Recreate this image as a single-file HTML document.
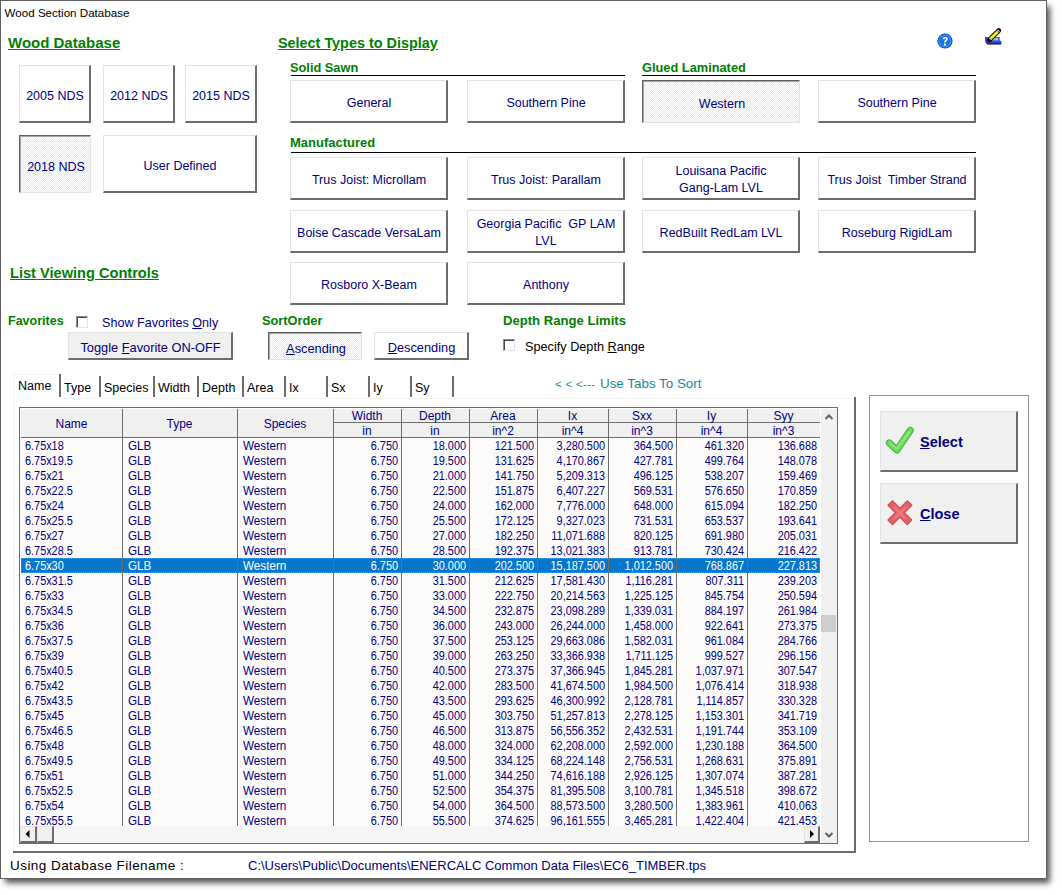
<!DOCTYPE html><html><head><meta charset="utf-8"><style>
html,body{margin:0;padding:0;width:1062px;height:895px;overflow:hidden;background:#fff;}
body{position:relative;font-family:"Liberation Sans", sans-serif;}
.t{position:absolute;white-space:nowrap;}
.b{position:absolute;box-sizing:content-box;}
svg.b{overflow:visible;}
</style></head><body>
<div class="b" style="left:0;top:0;width:1047px;height:879px;box-shadow:4px 5px 6px -1px rgba(0,0,0,0.68);"></div>
<div class="b" style="left:0;top:0;width:1045px;height:877px;border:1px solid #5f5f5f;background:#fff;"></div>
<div class="t" style="left:4.6px;top:7.18px;font-size:11.6px;line-height:11.6px;color:#000;">Wood Section Database</div>
<div class="t" style="left:8px;top:35.30px;font-size:15px;line-height:15px;color:#008000;font-weight:bold;"><u>Wood Database</u></div>
<div class="t" style="left:278px;top:35.81px;font-size:14.4px;line-height:14.4px;color:#008000;font-weight:bold;"><u>Select Types to Display</u></div>
<div class="t" style="left:10px;top:265.64px;font-size:14.6px;line-height:14.6px;color:#008000;font-weight:bold;"><u>List Viewing Controls</u></div>
<div class="b" style="left:19px;top:65px;width:69px;height:55px;background:#fff;border-top:1px solid #e3e3e3;border-left:1px solid #e3e3e3;border-bottom:2px solid #6c6c6c;border-right:2px solid #6c6c6c;"></div>
<div class="t" style="left:19px;width:72px;text-align:center;top:89.92px;font-size:12.5px;line-height:12.5px;color:#000080;">2005 NDS</div>
<div class="b" style="left:103px;top:65px;width:69px;height:55px;background:#fff;border-top:1px solid #e3e3e3;border-left:1px solid #e3e3e3;border-bottom:2px solid #6c6c6c;border-right:2px solid #6c6c6c;"></div>
<div class="t" style="left:103px;width:72px;text-align:center;top:89.92px;font-size:12.5px;line-height:12.5px;color:#000080;">2012 NDS</div>
<div class="b" style="left:185px;top:65px;width:69px;height:55px;background:#fff;border-top:1px solid #e3e3e3;border-left:1px solid #e3e3e3;border-bottom:2px solid #6c6c6c;border-right:2px solid #6c6c6c;"></div>
<div class="t" style="left:185px;width:72px;text-align:center;top:89.92px;font-size:12.5px;line-height:12.5px;color:#000080;">2015 NDS</div>
<div class="b" style="left:19px;top:135px;width:70px;height:56px;background:repeating-conic-gradient(#fafa62 0 25%, #fff 0 50%) 0 0/2px 2px;border-top:1px solid #606060;border-left:1px solid #606060;border-bottom:1px solid #e3e3e3;border-right:1px solid #e3e3e3;box-shadow:inset 1px 1px 0 #a4a4ac;"></div>
<div class="t" style="left:20px;width:72px;text-align:center;top:160.92px;font-size:12.5px;line-height:12.5px;color:#000080;">2018 NDS</div>
<div class="b" style="left:103px;top:135px;width:151px;height:55px;background:#fff;border-top:1px solid #e3e3e3;border-left:1px solid #e3e3e3;border-bottom:2px solid #6c6c6c;border-right:2px solid #6c6c6c;"></div>
<div class="t" style="left:103px;width:154px;text-align:center;top:159.92px;font-size:12.5px;line-height:12.5px;color:#000080;">User Defined</div>
<div class="t" style="left:290px;top:61.56px;font-size:12.8px;line-height:12.8px;color:#008000;font-weight:bold;">Solid Sawn</div>
<div class="b" style="left:291px;top:75px;width:334px;height:1px;background:#000;"></div>
<div class="t" style="left:642px;top:61.56px;font-size:12.8px;line-height:12.8px;color:#008000;font-weight:bold;">Glued Laminated</div>
<div class="b" style="left:642px;top:75px;width:334px;height:1px;background:#000;"></div>
<div class="t" style="left:290px;top:136.00px;font-size:13px;line-height:13px;color:#008000;font-weight:bold;">Manufactured</div>
<div class="b" style="left:291px;top:152px;width:685px;height:1px;background:#000;"></div>
<div class="b" style="left:290px;top:80px;width:155px;height:40px;background:#fff;border-top:1px solid #e3e3e3;border-left:1px solid #e3e3e3;border-bottom:2px solid #6c6c6c;border-right:2px solid #6c6c6c;"></div>
<div class="t" style="left:290px;width:158px;text-align:center;top:97.42px;font-size:12.5px;line-height:12.5px;color:#000080;">General</div>
<div class="b" style="left:467px;top:80px;width:155px;height:40px;background:#fff;border-top:1px solid #e3e3e3;border-left:1px solid #e3e3e3;border-bottom:2px solid #6c6c6c;border-right:2px solid #6c6c6c;"></div>
<div class="t" style="left:467px;width:158px;text-align:center;top:97.42px;font-size:12.5px;line-height:12.5px;color:#000080;">Southern Pine</div>
<div class="b" style="left:642px;top:80px;width:156px;height:41px;background:repeating-conic-gradient(#fafa62 0 25%, #fff 0 50%) 0 0/2px 2px;border-top:1px solid #606060;border-left:1px solid #606060;border-bottom:1px solid #e3e3e3;border-right:1px solid #e3e3e3;box-shadow:inset 1px 1px 0 #a4a4ac;"></div>
<div class="t" style="left:643px;width:158px;text-align:center;top:98.42px;font-size:12.5px;line-height:12.5px;color:#000080;">Western</div>
<div class="b" style="left:818px;top:80px;width:155px;height:40px;background:#fff;border-top:1px solid #e3e3e3;border-left:1px solid #e3e3e3;border-bottom:2px solid #6c6c6c;border-right:2px solid #6c6c6c;"></div>
<div class="t" style="left:818px;width:158px;text-align:center;top:97.42px;font-size:12.5px;line-height:12.5px;color:#000080;">Southern Pine</div>
<div class="b" style="left:290px;top:157px;width:155px;height:40px;background:#fff;border-top:1px solid #e3e3e3;border-left:1px solid #e3e3e3;border-bottom:2px solid #6c6c6c;border-right:2px solid #6c6c6c;"></div>
<div class="t" style="left:290px;width:158px;text-align:center;top:174.42px;font-size:12.5px;line-height:12.5px;color:#000080;">Trus Joist: Microllam</div>
<div class="b" style="left:467px;top:157px;width:155px;height:40px;background:#fff;border-top:1px solid #e3e3e3;border-left:1px solid #e3e3e3;border-bottom:2px solid #6c6c6c;border-right:2px solid #6c6c6c;"></div>
<div class="t" style="left:467px;width:158px;text-align:center;top:174.42px;font-size:12.5px;line-height:12.5px;color:#000080;">Trus Joist: Parallam</div>
<div class="b" style="left:642px;top:157px;width:155px;height:40px;background:#fff;border-top:1px solid #e3e3e3;border-left:1px solid #e3e3e3;border-bottom:2px solid #6c6c6c;border-right:2px solid #6c6c6c;"></div>
<div class="t" style="left:642px;width:158px;text-align:center;top:165.42px;font-size:12.5px;line-height:12.5px;color:#000080;">Louisana Pacific</div>
<div class="t" style="left:642px;width:158px;text-align:center;top:182.42px;font-size:12.5px;line-height:12.5px;color:#000080;">Gang-Lam LVL</div>
<div class="b" style="left:818px;top:157px;width:155px;height:40px;background:#fff;border-top:1px solid #e3e3e3;border-left:1px solid #e3e3e3;border-bottom:2px solid #6c6c6c;border-right:2px solid #6c6c6c;"></div>
<div class="t" style="left:818px;width:158px;text-align:center;top:174.42px;font-size:12.5px;line-height:12.5px;color:#000080;">Trus Joist&nbsp; Timber Strand</div>
<div class="b" style="left:290px;top:210px;width:155px;height:40px;background:#fff;border-top:1px solid #e3e3e3;border-left:1px solid #e3e3e3;border-bottom:2px solid #6c6c6c;border-right:2px solid #6c6c6c;"></div>
<div class="t" style="left:290px;width:158px;text-align:center;top:227.42px;font-size:12.5px;line-height:12.5px;color:#000080;">Boise Cascade VersaLam</div>
<div class="b" style="left:467px;top:210px;width:155px;height:40px;background:#fff;border-top:1px solid #e3e3e3;border-left:1px solid #e3e3e3;border-bottom:2px solid #6c6c6c;border-right:2px solid #6c6c6c;"></div>
<div class="t" style="left:467px;width:158px;text-align:center;top:218.42px;font-size:12.5px;line-height:12.5px;color:#000080;">Georgia Pacific&nbsp; GP LAM</div>
<div class="t" style="left:467px;width:158px;text-align:center;top:235.42px;font-size:12.5px;line-height:12.5px;color:#000080;">LVL</div>
<div class="b" style="left:642px;top:210px;width:155px;height:40px;background:#fff;border-top:1px solid #e3e3e3;border-left:1px solid #e3e3e3;border-bottom:2px solid #6c6c6c;border-right:2px solid #6c6c6c;"></div>
<div class="t" style="left:642px;width:158px;text-align:center;top:227.42px;font-size:12.5px;line-height:12.5px;color:#000080;">RedBuilt RedLam LVL</div>
<div class="b" style="left:818px;top:210px;width:155px;height:40px;background:#fff;border-top:1px solid #e3e3e3;border-left:1px solid #e3e3e3;border-bottom:2px solid #6c6c6c;border-right:2px solid #6c6c6c;"></div>
<div class="t" style="left:818px;width:158px;text-align:center;top:227.42px;font-size:12.5px;line-height:12.5px;color:#000080;">Roseburg RigidLam</div>
<div class="b" style="left:290px;top:262px;width:155px;height:40px;background:#fff;border-top:1px solid #e3e3e3;border-left:1px solid #e3e3e3;border-bottom:2px solid #6c6c6c;border-right:2px solid #6c6c6c;"></div>
<div class="t" style="left:290px;width:158px;text-align:center;top:279.42px;font-size:12.5px;line-height:12.5px;color:#000080;">Rosboro X-Beam</div>
<div class="b" style="left:467px;top:262px;width:155px;height:40px;background:#fff;border-top:1px solid #e3e3e3;border-left:1px solid #e3e3e3;border-bottom:2px solid #6c6c6c;border-right:2px solid #6c6c6c;"></div>
<div class="t" style="left:467px;width:158px;text-align:center;top:279.42px;font-size:12.5px;line-height:12.5px;color:#000080;">Anthony</div>
<div class="t" style="left:8px;top:315.42px;font-size:12.5px;line-height:12.5px;color:#008000;font-weight:bold;">Favorites</div>
<div class="b" style="left:76px;top:316px;width:10px;height:10px;border-top:1px solid #8a8a8a;border-left:1px solid #8a8a8a;border-right:1px solid #e3e3e3;border-bottom:1px solid #e3e3e3;background:#fff;box-shadow:inset 1px 1px 0 #484848;"></div>
<div class="t" style="left:102px;top:317.33px;font-size:12.6px;line-height:12.6px;color:#000080;">Show Favorites <u>O</u>nly</div>
<div class="b" style="left:68px;top:332px;width:162px;height:25px;background:#f0f0f0;border-top:1px solid #e3e3e3;border-left:1px solid #e3e3e3;border-bottom:2px solid #6c6c6c;border-right:2px solid #6c6c6c;"></div>
<div class="t" style="left:68px;width:165px;text-align:center;top:341.66px;font-size:12.8px;line-height:12.8px;color:#000080;">Toggle <u>F</u>avorite ON-OFF</div>
<div class="t" style="left:262px;top:314.96px;font-size:12.8px;line-height:12.8px;color:#008000;font-weight:bold;">SortOrder</div>
<div class="b" style="left:268px;top:332px;width:92px;height:26px;background:repeating-conic-gradient(#fafa62 0 25%, #fff 0 50%) 0 0/2px 2px;border-top:1px solid #606060;border-left:1px solid #606060;border-bottom:1px solid #e3e3e3;border-right:1px solid #e3e3e3;box-shadow:inset 1px 1px 0 #a4a4ac;"></div>
<div class="t" style="left:269px;width:94px;text-align:center;top:342.66px;font-size:12.8px;line-height:12.8px;color:#000080;"><u>A</u>scending</div>
<div class="b" style="left:374px;top:332px;width:92px;height:25px;background:#fff;border-top:1px solid #e3e3e3;border-left:1px solid #e3e3e3;border-bottom:2px solid #6c6c6c;border-right:2px solid #6c6c6c;"></div>
<div class="t" style="left:374px;width:95px;text-align:center;top:341.66px;font-size:12.8px;line-height:12.8px;color:#000080;"><u>D</u>escending</div>
<div class="t" style="left:503px;top:313.91px;font-size:13.1px;line-height:13.1px;color:#008000;font-weight:bold;">Depth Range Limits</div>
<div class="b" style="left:503px;top:339px;width:10px;height:10px;border-top:1px solid #8a8a8a;border-left:1px solid #8a8a8a;border-right:1px solid #e3e3e3;border-bottom:1px solid #e3e3e3;background:#fff;box-shadow:inset 1px 1px 0 #484848;"></div>
<div class="t" style="left:525px;top:340.75px;font-size:12.7px;line-height:12.7px;color:#000;">Specify Depth <u>R</u>ange</div>
<div class="b" style="left:13px;top:398px;width:840px;height:453px;border-top:1px solid #f2f2f2;border-left:1px solid #f2f2f2;"></div>
<div class="b" style="left:854px;top:397px;width:2px;height:456px;background:#6c6c6c;"></div>
<div class="b" style="left:13px;top:851px;width:843px;height:2px;background:#6c6c6c;"></div>
<div class="b" style="left:14px;top:374px;width:43px;height:24px;background:#fff;border-top:1px solid #f2f2f2;border-left:1px solid #f2f2f2;"></div>
<div class="b" style="left:59px;top:374px;width:2px;height:23px;background:#6c6c6c;"></div>
<div class="t" style="left:18px;top:380.42px;font-size:12.5px;line-height:12.5px;color:#000;">Name</div>
<div class="b" style="left:99px;top:376px;width:2px;height:21px;background:#6c6c6c;"></div>
<div class="t" style="left:64px;top:381.92px;font-size:12.5px;line-height:12.5px;color:#000;">Type</div>
<div class="b" style="left:153px;top:376px;width:2px;height:21px;background:#6c6c6c;"></div>
<div class="t" style="left:104px;top:381.92px;font-size:12.5px;line-height:12.5px;color:#000;">Species</div>
<div class="b" style="left:197px;top:376px;width:2px;height:21px;background:#6c6c6c;"></div>
<div class="t" style="left:158px;top:381.92px;font-size:12.5px;line-height:12.5px;color:#000;">Width</div>
<div class="b" style="left:242px;top:376px;width:2px;height:21px;background:#6c6c6c;"></div>
<div class="t" style="left:202px;top:381.92px;font-size:12.5px;line-height:12.5px;color:#000;">Depth</div>
<div class="b" style="left:284px;top:376px;width:2px;height:21px;background:#6c6c6c;"></div>
<div class="t" style="left:247px;top:381.92px;font-size:12.5px;line-height:12.5px;color:#000;">Area</div>
<div class="b" style="left:326px;top:376px;width:2px;height:21px;background:#6c6c6c;"></div>
<div class="t" style="left:289px;top:381.92px;font-size:12.5px;line-height:12.5px;color:#000;">Ix</div>
<div class="b" style="left:368px;top:376px;width:2px;height:21px;background:#6c6c6c;"></div>
<div class="t" style="left:331px;top:381.92px;font-size:12.5px;line-height:12.5px;color:#000;">Sx</div>
<div class="b" style="left:410px;top:376px;width:2px;height:21px;background:#6c6c6c;"></div>
<div class="t" style="left:373px;top:381.92px;font-size:12.5px;line-height:12.5px;color:#000;">Iy</div>
<div class="b" style="left:452px;top:376px;width:2px;height:21px;background:#6c6c6c;"></div>
<div class="t" style="left:415px;top:381.92px;font-size:12.5px;line-height:12.5px;color:#000;">Sy</div>
<div class="t" style="left:555px;top:378.77px;font-size:11.5px;line-height:11.5px;color:#168a98;letter-spacing:0.3px;">&lt;&nbsp;&lt;&nbsp;&lt;---</div>
<div class="t" style="left:600px;top:377.16px;font-size:13.4px;line-height:13.4px;color:#168a98;">Use Tabs To Sort</div>
<div class="b" style="left:19px;top:407px;width:817px;height:435px;border:1px solid #6c6c6c;background:#fff;"></div>
<div class="b" style="left:21px;top:409px;width:799px;height:28px;background:#f0f0f0;"></div>
<div class="b" style="left:21px;top:437px;width:799px;height:1px;background:#6c6c6c;"></div>
<div class="b" style="left:333px;top:422px;width:487px;height:1px;background:#6c6c6c;"></div>
<div class="t" style="left:21px;width:101px;text-align:center;top:417.84px;font-size:12px;line-height:12px;color:#000080;">Name</div>
<div class="t" style="left:122px;width:115px;text-align:center;top:417.84px;font-size:12px;line-height:12px;color:#000080;">Type</div>
<div class="t" style="left:237px;width:96px;text-align:center;top:417.84px;font-size:12px;line-height:12px;color:#000080;">Species</div>
<div class="t" style="left:333px;width:68px;text-align:center;top:409.84px;font-size:12px;line-height:12px;color:#000080;">Width</div>
<div class="t" style="left:333px;width:68px;text-align:center;top:424.84px;font-size:12px;line-height:12px;color:#000080;">in</div>
<div class="t" style="left:401px;width:68px;text-align:center;top:409.84px;font-size:12px;line-height:12px;color:#000080;">Depth</div>
<div class="t" style="left:401px;width:68px;text-align:center;top:424.84px;font-size:12px;line-height:12px;color:#000080;">in</div>
<div class="t" style="left:469px;width:68px;text-align:center;top:409.84px;font-size:12px;line-height:12px;color:#000080;">Area</div>
<div class="t" style="left:469px;width:68px;text-align:center;top:424.84px;font-size:12px;line-height:12px;color:#000080;">in^2</div>
<div class="t" style="left:537px;width:71px;text-align:center;top:409.84px;font-size:12px;line-height:12px;color:#000080;">Ix</div>
<div class="t" style="left:537px;width:71px;text-align:center;top:424.84px;font-size:12px;line-height:12px;color:#000080;">in^4</div>
<div class="t" style="left:608px;width:68px;text-align:center;top:409.84px;font-size:12px;line-height:12px;color:#000080;">Sxx</div>
<div class="t" style="left:608px;width:68px;text-align:center;top:424.84px;font-size:12px;line-height:12px;color:#000080;">in^3</div>
<div class="t" style="left:676px;width:71px;text-align:center;top:409.84px;font-size:12px;line-height:12px;color:#000080;">Iy</div>
<div class="t" style="left:676px;width:71px;text-align:center;top:424.84px;font-size:12px;line-height:12px;color:#000080;">in^4</div>
<div class="t" style="left:747px;width:73px;text-align:center;top:409.84px;font-size:12px;line-height:12px;color:#000080;">Syy</div>
<div class="t" style="left:747px;width:73px;text-align:center;top:424.84px;font-size:12px;line-height:12px;color:#000080;">in^3</div>
<div class="b" style="left:21px;top:438px;width:799px;height:388px;overflow:hidden;background:#fcfbfa;">
<div class="t" style="left:4px;top:1.59px;font-size:12.3px;line-height:12.3px;color:#000080;transform:scaleX(0.885);transform-origin:0 0;">6.75x18</div>
<div class="t" style="left:106.5px;top:1.59px;font-size:12.3px;line-height:12.3px;color:#000080;transform:scaleX(0.95);transform-origin:0 0;">GLB</div>
<div class="t" style="left:222px;top:1.59px;font-size:12.3px;line-height:12.3px;color:#000080;transform:scaleX(0.95);transform-origin:0 0;">Western</div>
<div class="t" style="left:312px;width:65px;text-align:right;top:1.59px;font-size:12.3px;line-height:12.3px;color:#000080;transform:scaleX(0.885);transform-origin:100% 0;">6.750</div>
<div class="t" style="left:380px;width:65px;text-align:right;top:1.59px;font-size:12.3px;line-height:12.3px;color:#000080;transform:scaleX(0.885);transform-origin:100% 0;">18.000</div>
<div class="t" style="left:448px;width:65px;text-align:right;top:1.59px;font-size:12.3px;line-height:12.3px;color:#000080;transform:scaleX(0.885);transform-origin:100% 0;">121.500</div>
<div class="t" style="left:516px;width:68px;text-align:right;top:1.59px;font-size:12.3px;line-height:12.3px;color:#000080;transform:scaleX(0.885);transform-origin:100% 0;">3,280.500</div>
<div class="t" style="left:587px;width:65px;text-align:right;top:1.59px;font-size:12.3px;line-height:12.3px;color:#000080;transform:scaleX(0.885);transform-origin:100% 0;">364.500</div>
<div class="t" style="left:655px;width:68px;text-align:right;top:1.59px;font-size:12.3px;line-height:12.3px;color:#000080;transform:scaleX(0.885);transform-origin:100% 0;">461.320</div>
<div class="t" style="left:726px;width:70px;text-align:right;top:1.59px;font-size:12.3px;line-height:12.3px;color:#000080;transform:scaleX(0.885);transform-origin:100% 0;">136.688</div>
<div class="t" style="left:4px;top:16.59px;font-size:12.3px;line-height:12.3px;color:#000080;transform:scaleX(0.885);transform-origin:0 0;">6.75x19.5</div>
<div class="t" style="left:106.5px;top:16.59px;font-size:12.3px;line-height:12.3px;color:#000080;transform:scaleX(0.95);transform-origin:0 0;">GLB</div>
<div class="t" style="left:222px;top:16.59px;font-size:12.3px;line-height:12.3px;color:#000080;transform:scaleX(0.95);transform-origin:0 0;">Western</div>
<div class="t" style="left:312px;width:65px;text-align:right;top:16.59px;font-size:12.3px;line-height:12.3px;color:#000080;transform:scaleX(0.885);transform-origin:100% 0;">6.750</div>
<div class="t" style="left:380px;width:65px;text-align:right;top:16.59px;font-size:12.3px;line-height:12.3px;color:#000080;transform:scaleX(0.885);transform-origin:100% 0;">19.500</div>
<div class="t" style="left:448px;width:65px;text-align:right;top:16.59px;font-size:12.3px;line-height:12.3px;color:#000080;transform:scaleX(0.885);transform-origin:100% 0;">131.625</div>
<div class="t" style="left:516px;width:68px;text-align:right;top:16.59px;font-size:12.3px;line-height:12.3px;color:#000080;transform:scaleX(0.885);transform-origin:100% 0;">4,170.867</div>
<div class="t" style="left:587px;width:65px;text-align:right;top:16.59px;font-size:12.3px;line-height:12.3px;color:#000080;transform:scaleX(0.885);transform-origin:100% 0;">427.781</div>
<div class="t" style="left:655px;width:68px;text-align:right;top:16.59px;font-size:12.3px;line-height:12.3px;color:#000080;transform:scaleX(0.885);transform-origin:100% 0;">499.764</div>
<div class="t" style="left:726px;width:70px;text-align:right;top:16.59px;font-size:12.3px;line-height:12.3px;color:#000080;transform:scaleX(0.885);transform-origin:100% 0;">148.078</div>
<div class="t" style="left:4px;top:31.59px;font-size:12.3px;line-height:12.3px;color:#000080;transform:scaleX(0.885);transform-origin:0 0;">6.75x21</div>
<div class="t" style="left:106.5px;top:31.59px;font-size:12.3px;line-height:12.3px;color:#000080;transform:scaleX(0.95);transform-origin:0 0;">GLB</div>
<div class="t" style="left:222px;top:31.59px;font-size:12.3px;line-height:12.3px;color:#000080;transform:scaleX(0.95);transform-origin:0 0;">Western</div>
<div class="t" style="left:312px;width:65px;text-align:right;top:31.59px;font-size:12.3px;line-height:12.3px;color:#000080;transform:scaleX(0.885);transform-origin:100% 0;">6.750</div>
<div class="t" style="left:380px;width:65px;text-align:right;top:31.59px;font-size:12.3px;line-height:12.3px;color:#000080;transform:scaleX(0.885);transform-origin:100% 0;">21.000</div>
<div class="t" style="left:448px;width:65px;text-align:right;top:31.59px;font-size:12.3px;line-height:12.3px;color:#000080;transform:scaleX(0.885);transform-origin:100% 0;">141.750</div>
<div class="t" style="left:516px;width:68px;text-align:right;top:31.59px;font-size:12.3px;line-height:12.3px;color:#000080;transform:scaleX(0.885);transform-origin:100% 0;">5,209.313</div>
<div class="t" style="left:587px;width:65px;text-align:right;top:31.59px;font-size:12.3px;line-height:12.3px;color:#000080;transform:scaleX(0.885);transform-origin:100% 0;">496.125</div>
<div class="t" style="left:655px;width:68px;text-align:right;top:31.59px;font-size:12.3px;line-height:12.3px;color:#000080;transform:scaleX(0.885);transform-origin:100% 0;">538.207</div>
<div class="t" style="left:726px;width:70px;text-align:right;top:31.59px;font-size:12.3px;line-height:12.3px;color:#000080;transform:scaleX(0.885);transform-origin:100% 0;">159.469</div>
<div class="t" style="left:4px;top:46.59px;font-size:12.3px;line-height:12.3px;color:#000080;transform:scaleX(0.885);transform-origin:0 0;">6.75x22.5</div>
<div class="t" style="left:106.5px;top:46.59px;font-size:12.3px;line-height:12.3px;color:#000080;transform:scaleX(0.95);transform-origin:0 0;">GLB</div>
<div class="t" style="left:222px;top:46.59px;font-size:12.3px;line-height:12.3px;color:#000080;transform:scaleX(0.95);transform-origin:0 0;">Western</div>
<div class="t" style="left:312px;width:65px;text-align:right;top:46.59px;font-size:12.3px;line-height:12.3px;color:#000080;transform:scaleX(0.885);transform-origin:100% 0;">6.750</div>
<div class="t" style="left:380px;width:65px;text-align:right;top:46.59px;font-size:12.3px;line-height:12.3px;color:#000080;transform:scaleX(0.885);transform-origin:100% 0;">22.500</div>
<div class="t" style="left:448px;width:65px;text-align:right;top:46.59px;font-size:12.3px;line-height:12.3px;color:#000080;transform:scaleX(0.885);transform-origin:100% 0;">151.875</div>
<div class="t" style="left:516px;width:68px;text-align:right;top:46.59px;font-size:12.3px;line-height:12.3px;color:#000080;transform:scaleX(0.885);transform-origin:100% 0;">6,407.227</div>
<div class="t" style="left:587px;width:65px;text-align:right;top:46.59px;font-size:12.3px;line-height:12.3px;color:#000080;transform:scaleX(0.885);transform-origin:100% 0;">569.531</div>
<div class="t" style="left:655px;width:68px;text-align:right;top:46.59px;font-size:12.3px;line-height:12.3px;color:#000080;transform:scaleX(0.885);transform-origin:100% 0;">576.650</div>
<div class="t" style="left:726px;width:70px;text-align:right;top:46.59px;font-size:12.3px;line-height:12.3px;color:#000080;transform:scaleX(0.885);transform-origin:100% 0;">170.859</div>
<div class="t" style="left:4px;top:61.59px;font-size:12.3px;line-height:12.3px;color:#000080;transform:scaleX(0.885);transform-origin:0 0;">6.75x24</div>
<div class="t" style="left:106.5px;top:61.59px;font-size:12.3px;line-height:12.3px;color:#000080;transform:scaleX(0.95);transform-origin:0 0;">GLB</div>
<div class="t" style="left:222px;top:61.59px;font-size:12.3px;line-height:12.3px;color:#000080;transform:scaleX(0.95);transform-origin:0 0;">Western</div>
<div class="t" style="left:312px;width:65px;text-align:right;top:61.59px;font-size:12.3px;line-height:12.3px;color:#000080;transform:scaleX(0.885);transform-origin:100% 0;">6.750</div>
<div class="t" style="left:380px;width:65px;text-align:right;top:61.59px;font-size:12.3px;line-height:12.3px;color:#000080;transform:scaleX(0.885);transform-origin:100% 0;">24.000</div>
<div class="t" style="left:448px;width:65px;text-align:right;top:61.59px;font-size:12.3px;line-height:12.3px;color:#000080;transform:scaleX(0.885);transform-origin:100% 0;">162.000</div>
<div class="t" style="left:516px;width:68px;text-align:right;top:61.59px;font-size:12.3px;line-height:12.3px;color:#000080;transform:scaleX(0.885);transform-origin:100% 0;">7,776.000</div>
<div class="t" style="left:587px;width:65px;text-align:right;top:61.59px;font-size:12.3px;line-height:12.3px;color:#000080;transform:scaleX(0.885);transform-origin:100% 0;">648.000</div>
<div class="t" style="left:655px;width:68px;text-align:right;top:61.59px;font-size:12.3px;line-height:12.3px;color:#000080;transform:scaleX(0.885);transform-origin:100% 0;">615.094</div>
<div class="t" style="left:726px;width:70px;text-align:right;top:61.59px;font-size:12.3px;line-height:12.3px;color:#000080;transform:scaleX(0.885);transform-origin:100% 0;">182.250</div>
<div class="t" style="left:4px;top:76.59px;font-size:12.3px;line-height:12.3px;color:#000080;transform:scaleX(0.885);transform-origin:0 0;">6.75x25.5</div>
<div class="t" style="left:106.5px;top:76.59px;font-size:12.3px;line-height:12.3px;color:#000080;transform:scaleX(0.95);transform-origin:0 0;">GLB</div>
<div class="t" style="left:222px;top:76.59px;font-size:12.3px;line-height:12.3px;color:#000080;transform:scaleX(0.95);transform-origin:0 0;">Western</div>
<div class="t" style="left:312px;width:65px;text-align:right;top:76.59px;font-size:12.3px;line-height:12.3px;color:#000080;transform:scaleX(0.885);transform-origin:100% 0;">6.750</div>
<div class="t" style="left:380px;width:65px;text-align:right;top:76.59px;font-size:12.3px;line-height:12.3px;color:#000080;transform:scaleX(0.885);transform-origin:100% 0;">25.500</div>
<div class="t" style="left:448px;width:65px;text-align:right;top:76.59px;font-size:12.3px;line-height:12.3px;color:#000080;transform:scaleX(0.885);transform-origin:100% 0;">172.125</div>
<div class="t" style="left:516px;width:68px;text-align:right;top:76.59px;font-size:12.3px;line-height:12.3px;color:#000080;transform:scaleX(0.885);transform-origin:100% 0;">9,327.023</div>
<div class="t" style="left:587px;width:65px;text-align:right;top:76.59px;font-size:12.3px;line-height:12.3px;color:#000080;transform:scaleX(0.885);transform-origin:100% 0;">731.531</div>
<div class="t" style="left:655px;width:68px;text-align:right;top:76.59px;font-size:12.3px;line-height:12.3px;color:#000080;transform:scaleX(0.885);transform-origin:100% 0;">653.537</div>
<div class="t" style="left:726px;width:70px;text-align:right;top:76.59px;font-size:12.3px;line-height:12.3px;color:#000080;transform:scaleX(0.885);transform-origin:100% 0;">193.641</div>
<div class="t" style="left:4px;top:91.59px;font-size:12.3px;line-height:12.3px;color:#000080;transform:scaleX(0.885);transform-origin:0 0;">6.75x27</div>
<div class="t" style="left:106.5px;top:91.59px;font-size:12.3px;line-height:12.3px;color:#000080;transform:scaleX(0.95);transform-origin:0 0;">GLB</div>
<div class="t" style="left:222px;top:91.59px;font-size:12.3px;line-height:12.3px;color:#000080;transform:scaleX(0.95);transform-origin:0 0;">Western</div>
<div class="t" style="left:312px;width:65px;text-align:right;top:91.59px;font-size:12.3px;line-height:12.3px;color:#000080;transform:scaleX(0.885);transform-origin:100% 0;">6.750</div>
<div class="t" style="left:380px;width:65px;text-align:right;top:91.59px;font-size:12.3px;line-height:12.3px;color:#000080;transform:scaleX(0.885);transform-origin:100% 0;">27.000</div>
<div class="t" style="left:448px;width:65px;text-align:right;top:91.59px;font-size:12.3px;line-height:12.3px;color:#000080;transform:scaleX(0.885);transform-origin:100% 0;">182.250</div>
<div class="t" style="left:516px;width:68px;text-align:right;top:91.59px;font-size:12.3px;line-height:12.3px;color:#000080;transform:scaleX(0.885);transform-origin:100% 0;">11,071.688</div>
<div class="t" style="left:587px;width:65px;text-align:right;top:91.59px;font-size:12.3px;line-height:12.3px;color:#000080;transform:scaleX(0.885);transform-origin:100% 0;">820.125</div>
<div class="t" style="left:655px;width:68px;text-align:right;top:91.59px;font-size:12.3px;line-height:12.3px;color:#000080;transform:scaleX(0.885);transform-origin:100% 0;">691.980</div>
<div class="t" style="left:726px;width:70px;text-align:right;top:91.59px;font-size:12.3px;line-height:12.3px;color:#000080;transform:scaleX(0.885);transform-origin:100% 0;">205.031</div>
<div class="t" style="left:4px;top:106.59px;font-size:12.3px;line-height:12.3px;color:#000080;transform:scaleX(0.885);transform-origin:0 0;">6.75x28.5</div>
<div class="t" style="left:106.5px;top:106.59px;font-size:12.3px;line-height:12.3px;color:#000080;transform:scaleX(0.95);transform-origin:0 0;">GLB</div>
<div class="t" style="left:222px;top:106.59px;font-size:12.3px;line-height:12.3px;color:#000080;transform:scaleX(0.95);transform-origin:0 0;">Western</div>
<div class="t" style="left:312px;width:65px;text-align:right;top:106.59px;font-size:12.3px;line-height:12.3px;color:#000080;transform:scaleX(0.885);transform-origin:100% 0;">6.750</div>
<div class="t" style="left:380px;width:65px;text-align:right;top:106.59px;font-size:12.3px;line-height:12.3px;color:#000080;transform:scaleX(0.885);transform-origin:100% 0;">28.500</div>
<div class="t" style="left:448px;width:65px;text-align:right;top:106.59px;font-size:12.3px;line-height:12.3px;color:#000080;transform:scaleX(0.885);transform-origin:100% 0;">192.375</div>
<div class="t" style="left:516px;width:68px;text-align:right;top:106.59px;font-size:12.3px;line-height:12.3px;color:#000080;transform:scaleX(0.885);transform-origin:100% 0;">13,021.383</div>
<div class="t" style="left:587px;width:65px;text-align:right;top:106.59px;font-size:12.3px;line-height:12.3px;color:#000080;transform:scaleX(0.885);transform-origin:100% 0;">913.781</div>
<div class="t" style="left:655px;width:68px;text-align:right;top:106.59px;font-size:12.3px;line-height:12.3px;color:#000080;transform:scaleX(0.885);transform-origin:100% 0;">730.424</div>
<div class="t" style="left:726px;width:70px;text-align:right;top:106.59px;font-size:12.3px;line-height:12.3px;color:#000080;transform:scaleX(0.885);transform-origin:100% 0;">216.422</div>
<div class="b" style="left:0;top:120px;width:797px;height:13px;background:#0576cc;border:1px dotted #a89040;"></div>
<div class="t" style="left:4px;top:121.59px;font-size:12.3px;line-height:12.3px;color:#fff;transform:scaleX(0.885);transform-origin:0 0;">6.75x30</div>
<div class="t" style="left:106.5px;top:121.59px;font-size:12.3px;line-height:12.3px;color:#fff;transform:scaleX(0.95);transform-origin:0 0;">GLB</div>
<div class="t" style="left:222px;top:121.59px;font-size:12.3px;line-height:12.3px;color:#fff;transform:scaleX(0.95);transform-origin:0 0;">Western</div>
<div class="t" style="left:312px;width:65px;text-align:right;top:121.59px;font-size:12.3px;line-height:12.3px;color:#fff;transform:scaleX(0.885);transform-origin:100% 0;">6.750</div>
<div class="t" style="left:380px;width:65px;text-align:right;top:121.59px;font-size:12.3px;line-height:12.3px;color:#fff;transform:scaleX(0.885);transform-origin:100% 0;">30.000</div>
<div class="t" style="left:448px;width:65px;text-align:right;top:121.59px;font-size:12.3px;line-height:12.3px;color:#fff;transform:scaleX(0.885);transform-origin:100% 0;">202.500</div>
<div class="t" style="left:516px;width:68px;text-align:right;top:121.59px;font-size:12.3px;line-height:12.3px;color:#fff;transform:scaleX(0.885);transform-origin:100% 0;">15,187.500</div>
<div class="t" style="left:587px;width:65px;text-align:right;top:121.59px;font-size:12.3px;line-height:12.3px;color:#fff;transform:scaleX(0.885);transform-origin:100% 0;">1,012.500</div>
<div class="t" style="left:655px;width:68px;text-align:right;top:121.59px;font-size:12.3px;line-height:12.3px;color:#fff;transform:scaleX(0.885);transform-origin:100% 0;">768.867</div>
<div class="t" style="left:726px;width:70px;text-align:right;top:121.59px;font-size:12.3px;line-height:12.3px;color:#fff;transform:scaleX(0.885);transform-origin:100% 0;">227.813</div>
<div class="t" style="left:4px;top:136.59px;font-size:12.3px;line-height:12.3px;color:#000080;transform:scaleX(0.885);transform-origin:0 0;">6.75x31.5</div>
<div class="t" style="left:106.5px;top:136.59px;font-size:12.3px;line-height:12.3px;color:#000080;transform:scaleX(0.95);transform-origin:0 0;">GLB</div>
<div class="t" style="left:222px;top:136.59px;font-size:12.3px;line-height:12.3px;color:#000080;transform:scaleX(0.95);transform-origin:0 0;">Western</div>
<div class="t" style="left:312px;width:65px;text-align:right;top:136.59px;font-size:12.3px;line-height:12.3px;color:#000080;transform:scaleX(0.885);transform-origin:100% 0;">6.750</div>
<div class="t" style="left:380px;width:65px;text-align:right;top:136.59px;font-size:12.3px;line-height:12.3px;color:#000080;transform:scaleX(0.885);transform-origin:100% 0;">31.500</div>
<div class="t" style="left:448px;width:65px;text-align:right;top:136.59px;font-size:12.3px;line-height:12.3px;color:#000080;transform:scaleX(0.885);transform-origin:100% 0;">212.625</div>
<div class="t" style="left:516px;width:68px;text-align:right;top:136.59px;font-size:12.3px;line-height:12.3px;color:#000080;transform:scaleX(0.885);transform-origin:100% 0;">17,581.430</div>
<div class="t" style="left:587px;width:65px;text-align:right;top:136.59px;font-size:12.3px;line-height:12.3px;color:#000080;transform:scaleX(0.885);transform-origin:100% 0;">1,116.281</div>
<div class="t" style="left:655px;width:68px;text-align:right;top:136.59px;font-size:12.3px;line-height:12.3px;color:#000080;transform:scaleX(0.885);transform-origin:100% 0;">807.311</div>
<div class="t" style="left:726px;width:70px;text-align:right;top:136.59px;font-size:12.3px;line-height:12.3px;color:#000080;transform:scaleX(0.885);transform-origin:100% 0;">239.203</div>
<div class="t" style="left:4px;top:151.59px;font-size:12.3px;line-height:12.3px;color:#000080;transform:scaleX(0.885);transform-origin:0 0;">6.75x33</div>
<div class="t" style="left:106.5px;top:151.59px;font-size:12.3px;line-height:12.3px;color:#000080;transform:scaleX(0.95);transform-origin:0 0;">GLB</div>
<div class="t" style="left:222px;top:151.59px;font-size:12.3px;line-height:12.3px;color:#000080;transform:scaleX(0.95);transform-origin:0 0;">Western</div>
<div class="t" style="left:312px;width:65px;text-align:right;top:151.59px;font-size:12.3px;line-height:12.3px;color:#000080;transform:scaleX(0.885);transform-origin:100% 0;">6.750</div>
<div class="t" style="left:380px;width:65px;text-align:right;top:151.59px;font-size:12.3px;line-height:12.3px;color:#000080;transform:scaleX(0.885);transform-origin:100% 0;">33.000</div>
<div class="t" style="left:448px;width:65px;text-align:right;top:151.59px;font-size:12.3px;line-height:12.3px;color:#000080;transform:scaleX(0.885);transform-origin:100% 0;">222.750</div>
<div class="t" style="left:516px;width:68px;text-align:right;top:151.59px;font-size:12.3px;line-height:12.3px;color:#000080;transform:scaleX(0.885);transform-origin:100% 0;">20,214.563</div>
<div class="t" style="left:587px;width:65px;text-align:right;top:151.59px;font-size:12.3px;line-height:12.3px;color:#000080;transform:scaleX(0.885);transform-origin:100% 0;">1,225.125</div>
<div class="t" style="left:655px;width:68px;text-align:right;top:151.59px;font-size:12.3px;line-height:12.3px;color:#000080;transform:scaleX(0.885);transform-origin:100% 0;">845.754</div>
<div class="t" style="left:726px;width:70px;text-align:right;top:151.59px;font-size:12.3px;line-height:12.3px;color:#000080;transform:scaleX(0.885);transform-origin:100% 0;">250.594</div>
<div class="t" style="left:4px;top:166.59px;font-size:12.3px;line-height:12.3px;color:#000080;transform:scaleX(0.885);transform-origin:0 0;">6.75x34.5</div>
<div class="t" style="left:106.5px;top:166.59px;font-size:12.3px;line-height:12.3px;color:#000080;transform:scaleX(0.95);transform-origin:0 0;">GLB</div>
<div class="t" style="left:222px;top:166.59px;font-size:12.3px;line-height:12.3px;color:#000080;transform:scaleX(0.95);transform-origin:0 0;">Western</div>
<div class="t" style="left:312px;width:65px;text-align:right;top:166.59px;font-size:12.3px;line-height:12.3px;color:#000080;transform:scaleX(0.885);transform-origin:100% 0;">6.750</div>
<div class="t" style="left:380px;width:65px;text-align:right;top:166.59px;font-size:12.3px;line-height:12.3px;color:#000080;transform:scaleX(0.885);transform-origin:100% 0;">34.500</div>
<div class="t" style="left:448px;width:65px;text-align:right;top:166.59px;font-size:12.3px;line-height:12.3px;color:#000080;transform:scaleX(0.885);transform-origin:100% 0;">232.875</div>
<div class="t" style="left:516px;width:68px;text-align:right;top:166.59px;font-size:12.3px;line-height:12.3px;color:#000080;transform:scaleX(0.885);transform-origin:100% 0;">23,098.289</div>
<div class="t" style="left:587px;width:65px;text-align:right;top:166.59px;font-size:12.3px;line-height:12.3px;color:#000080;transform:scaleX(0.885);transform-origin:100% 0;">1,339.031</div>
<div class="t" style="left:655px;width:68px;text-align:right;top:166.59px;font-size:12.3px;line-height:12.3px;color:#000080;transform:scaleX(0.885);transform-origin:100% 0;">884.197</div>
<div class="t" style="left:726px;width:70px;text-align:right;top:166.59px;font-size:12.3px;line-height:12.3px;color:#000080;transform:scaleX(0.885);transform-origin:100% 0;">261.984</div>
<div class="t" style="left:4px;top:181.59px;font-size:12.3px;line-height:12.3px;color:#000080;transform:scaleX(0.885);transform-origin:0 0;">6.75x36</div>
<div class="t" style="left:106.5px;top:181.59px;font-size:12.3px;line-height:12.3px;color:#000080;transform:scaleX(0.95);transform-origin:0 0;">GLB</div>
<div class="t" style="left:222px;top:181.59px;font-size:12.3px;line-height:12.3px;color:#000080;transform:scaleX(0.95);transform-origin:0 0;">Western</div>
<div class="t" style="left:312px;width:65px;text-align:right;top:181.59px;font-size:12.3px;line-height:12.3px;color:#000080;transform:scaleX(0.885);transform-origin:100% 0;">6.750</div>
<div class="t" style="left:380px;width:65px;text-align:right;top:181.59px;font-size:12.3px;line-height:12.3px;color:#000080;transform:scaleX(0.885);transform-origin:100% 0;">36.000</div>
<div class="t" style="left:448px;width:65px;text-align:right;top:181.59px;font-size:12.3px;line-height:12.3px;color:#000080;transform:scaleX(0.885);transform-origin:100% 0;">243.000</div>
<div class="t" style="left:516px;width:68px;text-align:right;top:181.59px;font-size:12.3px;line-height:12.3px;color:#000080;transform:scaleX(0.885);transform-origin:100% 0;">26,244.000</div>
<div class="t" style="left:587px;width:65px;text-align:right;top:181.59px;font-size:12.3px;line-height:12.3px;color:#000080;transform:scaleX(0.885);transform-origin:100% 0;">1,458.000</div>
<div class="t" style="left:655px;width:68px;text-align:right;top:181.59px;font-size:12.3px;line-height:12.3px;color:#000080;transform:scaleX(0.885);transform-origin:100% 0;">922.641</div>
<div class="t" style="left:726px;width:70px;text-align:right;top:181.59px;font-size:12.3px;line-height:12.3px;color:#000080;transform:scaleX(0.885);transform-origin:100% 0;">273.375</div>
<div class="t" style="left:4px;top:196.59px;font-size:12.3px;line-height:12.3px;color:#000080;transform:scaleX(0.885);transform-origin:0 0;">6.75x37.5</div>
<div class="t" style="left:106.5px;top:196.59px;font-size:12.3px;line-height:12.3px;color:#000080;transform:scaleX(0.95);transform-origin:0 0;">GLB</div>
<div class="t" style="left:222px;top:196.59px;font-size:12.3px;line-height:12.3px;color:#000080;transform:scaleX(0.95);transform-origin:0 0;">Western</div>
<div class="t" style="left:312px;width:65px;text-align:right;top:196.59px;font-size:12.3px;line-height:12.3px;color:#000080;transform:scaleX(0.885);transform-origin:100% 0;">6.750</div>
<div class="t" style="left:380px;width:65px;text-align:right;top:196.59px;font-size:12.3px;line-height:12.3px;color:#000080;transform:scaleX(0.885);transform-origin:100% 0;">37.500</div>
<div class="t" style="left:448px;width:65px;text-align:right;top:196.59px;font-size:12.3px;line-height:12.3px;color:#000080;transform:scaleX(0.885);transform-origin:100% 0;">253.125</div>
<div class="t" style="left:516px;width:68px;text-align:right;top:196.59px;font-size:12.3px;line-height:12.3px;color:#000080;transform:scaleX(0.885);transform-origin:100% 0;">29,663.086</div>
<div class="t" style="left:587px;width:65px;text-align:right;top:196.59px;font-size:12.3px;line-height:12.3px;color:#000080;transform:scaleX(0.885);transform-origin:100% 0;">1,582.031</div>
<div class="t" style="left:655px;width:68px;text-align:right;top:196.59px;font-size:12.3px;line-height:12.3px;color:#000080;transform:scaleX(0.885);transform-origin:100% 0;">961.084</div>
<div class="t" style="left:726px;width:70px;text-align:right;top:196.59px;font-size:12.3px;line-height:12.3px;color:#000080;transform:scaleX(0.885);transform-origin:100% 0;">284.766</div>
<div class="t" style="left:4px;top:211.59px;font-size:12.3px;line-height:12.3px;color:#000080;transform:scaleX(0.885);transform-origin:0 0;">6.75x39</div>
<div class="t" style="left:106.5px;top:211.59px;font-size:12.3px;line-height:12.3px;color:#000080;transform:scaleX(0.95);transform-origin:0 0;">GLB</div>
<div class="t" style="left:222px;top:211.59px;font-size:12.3px;line-height:12.3px;color:#000080;transform:scaleX(0.95);transform-origin:0 0;">Western</div>
<div class="t" style="left:312px;width:65px;text-align:right;top:211.59px;font-size:12.3px;line-height:12.3px;color:#000080;transform:scaleX(0.885);transform-origin:100% 0;">6.750</div>
<div class="t" style="left:380px;width:65px;text-align:right;top:211.59px;font-size:12.3px;line-height:12.3px;color:#000080;transform:scaleX(0.885);transform-origin:100% 0;">39.000</div>
<div class="t" style="left:448px;width:65px;text-align:right;top:211.59px;font-size:12.3px;line-height:12.3px;color:#000080;transform:scaleX(0.885);transform-origin:100% 0;">263.250</div>
<div class="t" style="left:516px;width:68px;text-align:right;top:211.59px;font-size:12.3px;line-height:12.3px;color:#000080;transform:scaleX(0.885);transform-origin:100% 0;">33,366.938</div>
<div class="t" style="left:587px;width:65px;text-align:right;top:211.59px;font-size:12.3px;line-height:12.3px;color:#000080;transform:scaleX(0.885);transform-origin:100% 0;">1,711.125</div>
<div class="t" style="left:655px;width:68px;text-align:right;top:211.59px;font-size:12.3px;line-height:12.3px;color:#000080;transform:scaleX(0.885);transform-origin:100% 0;">999.527</div>
<div class="t" style="left:726px;width:70px;text-align:right;top:211.59px;font-size:12.3px;line-height:12.3px;color:#000080;transform:scaleX(0.885);transform-origin:100% 0;">296.156</div>
<div class="t" style="left:4px;top:226.59px;font-size:12.3px;line-height:12.3px;color:#000080;transform:scaleX(0.885);transform-origin:0 0;">6.75x40.5</div>
<div class="t" style="left:106.5px;top:226.59px;font-size:12.3px;line-height:12.3px;color:#000080;transform:scaleX(0.95);transform-origin:0 0;">GLB</div>
<div class="t" style="left:222px;top:226.59px;font-size:12.3px;line-height:12.3px;color:#000080;transform:scaleX(0.95);transform-origin:0 0;">Western</div>
<div class="t" style="left:312px;width:65px;text-align:right;top:226.59px;font-size:12.3px;line-height:12.3px;color:#000080;transform:scaleX(0.885);transform-origin:100% 0;">6.750</div>
<div class="t" style="left:380px;width:65px;text-align:right;top:226.59px;font-size:12.3px;line-height:12.3px;color:#000080;transform:scaleX(0.885);transform-origin:100% 0;">40.500</div>
<div class="t" style="left:448px;width:65px;text-align:right;top:226.59px;font-size:12.3px;line-height:12.3px;color:#000080;transform:scaleX(0.885);transform-origin:100% 0;">273.375</div>
<div class="t" style="left:516px;width:68px;text-align:right;top:226.59px;font-size:12.3px;line-height:12.3px;color:#000080;transform:scaleX(0.885);transform-origin:100% 0;">37,366.945</div>
<div class="t" style="left:587px;width:65px;text-align:right;top:226.59px;font-size:12.3px;line-height:12.3px;color:#000080;transform:scaleX(0.885);transform-origin:100% 0;">1,845.281</div>
<div class="t" style="left:655px;width:68px;text-align:right;top:226.59px;font-size:12.3px;line-height:12.3px;color:#000080;transform:scaleX(0.885);transform-origin:100% 0;">1,037.971</div>
<div class="t" style="left:726px;width:70px;text-align:right;top:226.59px;font-size:12.3px;line-height:12.3px;color:#000080;transform:scaleX(0.885);transform-origin:100% 0;">307.547</div>
<div class="t" style="left:4px;top:241.59px;font-size:12.3px;line-height:12.3px;color:#000080;transform:scaleX(0.885);transform-origin:0 0;">6.75x42</div>
<div class="t" style="left:106.5px;top:241.59px;font-size:12.3px;line-height:12.3px;color:#000080;transform:scaleX(0.95);transform-origin:0 0;">GLB</div>
<div class="t" style="left:222px;top:241.59px;font-size:12.3px;line-height:12.3px;color:#000080;transform:scaleX(0.95);transform-origin:0 0;">Western</div>
<div class="t" style="left:312px;width:65px;text-align:right;top:241.59px;font-size:12.3px;line-height:12.3px;color:#000080;transform:scaleX(0.885);transform-origin:100% 0;">6.750</div>
<div class="t" style="left:380px;width:65px;text-align:right;top:241.59px;font-size:12.3px;line-height:12.3px;color:#000080;transform:scaleX(0.885);transform-origin:100% 0;">42.000</div>
<div class="t" style="left:448px;width:65px;text-align:right;top:241.59px;font-size:12.3px;line-height:12.3px;color:#000080;transform:scaleX(0.885);transform-origin:100% 0;">283.500</div>
<div class="t" style="left:516px;width:68px;text-align:right;top:241.59px;font-size:12.3px;line-height:12.3px;color:#000080;transform:scaleX(0.885);transform-origin:100% 0;">41,674.500</div>
<div class="t" style="left:587px;width:65px;text-align:right;top:241.59px;font-size:12.3px;line-height:12.3px;color:#000080;transform:scaleX(0.885);transform-origin:100% 0;">1,984.500</div>
<div class="t" style="left:655px;width:68px;text-align:right;top:241.59px;font-size:12.3px;line-height:12.3px;color:#000080;transform:scaleX(0.885);transform-origin:100% 0;">1,076.414</div>
<div class="t" style="left:726px;width:70px;text-align:right;top:241.59px;font-size:12.3px;line-height:12.3px;color:#000080;transform:scaleX(0.885);transform-origin:100% 0;">318.938</div>
<div class="t" style="left:4px;top:256.59px;font-size:12.3px;line-height:12.3px;color:#000080;transform:scaleX(0.885);transform-origin:0 0;">6.75x43.5</div>
<div class="t" style="left:106.5px;top:256.59px;font-size:12.3px;line-height:12.3px;color:#000080;transform:scaleX(0.95);transform-origin:0 0;">GLB</div>
<div class="t" style="left:222px;top:256.59px;font-size:12.3px;line-height:12.3px;color:#000080;transform:scaleX(0.95);transform-origin:0 0;">Western</div>
<div class="t" style="left:312px;width:65px;text-align:right;top:256.59px;font-size:12.3px;line-height:12.3px;color:#000080;transform:scaleX(0.885);transform-origin:100% 0;">6.750</div>
<div class="t" style="left:380px;width:65px;text-align:right;top:256.59px;font-size:12.3px;line-height:12.3px;color:#000080;transform:scaleX(0.885);transform-origin:100% 0;">43.500</div>
<div class="t" style="left:448px;width:65px;text-align:right;top:256.59px;font-size:12.3px;line-height:12.3px;color:#000080;transform:scaleX(0.885);transform-origin:100% 0;">293.625</div>
<div class="t" style="left:516px;width:68px;text-align:right;top:256.59px;font-size:12.3px;line-height:12.3px;color:#000080;transform:scaleX(0.885);transform-origin:100% 0;">46,300.992</div>
<div class="t" style="left:587px;width:65px;text-align:right;top:256.59px;font-size:12.3px;line-height:12.3px;color:#000080;transform:scaleX(0.885);transform-origin:100% 0;">2,128.781</div>
<div class="t" style="left:655px;width:68px;text-align:right;top:256.59px;font-size:12.3px;line-height:12.3px;color:#000080;transform:scaleX(0.885);transform-origin:100% 0;">1,114.857</div>
<div class="t" style="left:726px;width:70px;text-align:right;top:256.59px;font-size:12.3px;line-height:12.3px;color:#000080;transform:scaleX(0.885);transform-origin:100% 0;">330.328</div>
<div class="t" style="left:4px;top:271.59px;font-size:12.3px;line-height:12.3px;color:#000080;transform:scaleX(0.885);transform-origin:0 0;">6.75x45</div>
<div class="t" style="left:106.5px;top:271.59px;font-size:12.3px;line-height:12.3px;color:#000080;transform:scaleX(0.95);transform-origin:0 0;">GLB</div>
<div class="t" style="left:222px;top:271.59px;font-size:12.3px;line-height:12.3px;color:#000080;transform:scaleX(0.95);transform-origin:0 0;">Western</div>
<div class="t" style="left:312px;width:65px;text-align:right;top:271.59px;font-size:12.3px;line-height:12.3px;color:#000080;transform:scaleX(0.885);transform-origin:100% 0;">6.750</div>
<div class="t" style="left:380px;width:65px;text-align:right;top:271.59px;font-size:12.3px;line-height:12.3px;color:#000080;transform:scaleX(0.885);transform-origin:100% 0;">45.000</div>
<div class="t" style="left:448px;width:65px;text-align:right;top:271.59px;font-size:12.3px;line-height:12.3px;color:#000080;transform:scaleX(0.885);transform-origin:100% 0;">303.750</div>
<div class="t" style="left:516px;width:68px;text-align:right;top:271.59px;font-size:12.3px;line-height:12.3px;color:#000080;transform:scaleX(0.885);transform-origin:100% 0;">51,257.813</div>
<div class="t" style="left:587px;width:65px;text-align:right;top:271.59px;font-size:12.3px;line-height:12.3px;color:#000080;transform:scaleX(0.885);transform-origin:100% 0;">2,278.125</div>
<div class="t" style="left:655px;width:68px;text-align:right;top:271.59px;font-size:12.3px;line-height:12.3px;color:#000080;transform:scaleX(0.885);transform-origin:100% 0;">1,153.301</div>
<div class="t" style="left:726px;width:70px;text-align:right;top:271.59px;font-size:12.3px;line-height:12.3px;color:#000080;transform:scaleX(0.885);transform-origin:100% 0;">341.719</div>
<div class="t" style="left:4px;top:286.59px;font-size:12.3px;line-height:12.3px;color:#000080;transform:scaleX(0.885);transform-origin:0 0;">6.75x46.5</div>
<div class="t" style="left:106.5px;top:286.59px;font-size:12.3px;line-height:12.3px;color:#000080;transform:scaleX(0.95);transform-origin:0 0;">GLB</div>
<div class="t" style="left:222px;top:286.59px;font-size:12.3px;line-height:12.3px;color:#000080;transform:scaleX(0.95);transform-origin:0 0;">Western</div>
<div class="t" style="left:312px;width:65px;text-align:right;top:286.59px;font-size:12.3px;line-height:12.3px;color:#000080;transform:scaleX(0.885);transform-origin:100% 0;">6.750</div>
<div class="t" style="left:380px;width:65px;text-align:right;top:286.59px;font-size:12.3px;line-height:12.3px;color:#000080;transform:scaleX(0.885);transform-origin:100% 0;">46.500</div>
<div class="t" style="left:448px;width:65px;text-align:right;top:286.59px;font-size:12.3px;line-height:12.3px;color:#000080;transform:scaleX(0.885);transform-origin:100% 0;">313.875</div>
<div class="t" style="left:516px;width:68px;text-align:right;top:286.59px;font-size:12.3px;line-height:12.3px;color:#000080;transform:scaleX(0.885);transform-origin:100% 0;">56,556.352</div>
<div class="t" style="left:587px;width:65px;text-align:right;top:286.59px;font-size:12.3px;line-height:12.3px;color:#000080;transform:scaleX(0.885);transform-origin:100% 0;">2,432.531</div>
<div class="t" style="left:655px;width:68px;text-align:right;top:286.59px;font-size:12.3px;line-height:12.3px;color:#000080;transform:scaleX(0.885);transform-origin:100% 0;">1,191.744</div>
<div class="t" style="left:726px;width:70px;text-align:right;top:286.59px;font-size:12.3px;line-height:12.3px;color:#000080;transform:scaleX(0.885);transform-origin:100% 0;">353.109</div>
<div class="t" style="left:4px;top:301.59px;font-size:12.3px;line-height:12.3px;color:#000080;transform:scaleX(0.885);transform-origin:0 0;">6.75x48</div>
<div class="t" style="left:106.5px;top:301.59px;font-size:12.3px;line-height:12.3px;color:#000080;transform:scaleX(0.95);transform-origin:0 0;">GLB</div>
<div class="t" style="left:222px;top:301.59px;font-size:12.3px;line-height:12.3px;color:#000080;transform:scaleX(0.95);transform-origin:0 0;">Western</div>
<div class="t" style="left:312px;width:65px;text-align:right;top:301.59px;font-size:12.3px;line-height:12.3px;color:#000080;transform:scaleX(0.885);transform-origin:100% 0;">6.750</div>
<div class="t" style="left:380px;width:65px;text-align:right;top:301.59px;font-size:12.3px;line-height:12.3px;color:#000080;transform:scaleX(0.885);transform-origin:100% 0;">48.000</div>
<div class="t" style="left:448px;width:65px;text-align:right;top:301.59px;font-size:12.3px;line-height:12.3px;color:#000080;transform:scaleX(0.885);transform-origin:100% 0;">324.000</div>
<div class="t" style="left:516px;width:68px;text-align:right;top:301.59px;font-size:12.3px;line-height:12.3px;color:#000080;transform:scaleX(0.885);transform-origin:100% 0;">62,208.000</div>
<div class="t" style="left:587px;width:65px;text-align:right;top:301.59px;font-size:12.3px;line-height:12.3px;color:#000080;transform:scaleX(0.885);transform-origin:100% 0;">2,592.000</div>
<div class="t" style="left:655px;width:68px;text-align:right;top:301.59px;font-size:12.3px;line-height:12.3px;color:#000080;transform:scaleX(0.885);transform-origin:100% 0;">1,230.188</div>
<div class="t" style="left:726px;width:70px;text-align:right;top:301.59px;font-size:12.3px;line-height:12.3px;color:#000080;transform:scaleX(0.885);transform-origin:100% 0;">364.500</div>
<div class="t" style="left:4px;top:316.59px;font-size:12.3px;line-height:12.3px;color:#000080;transform:scaleX(0.885);transform-origin:0 0;">6.75x49.5</div>
<div class="t" style="left:106.5px;top:316.59px;font-size:12.3px;line-height:12.3px;color:#000080;transform:scaleX(0.95);transform-origin:0 0;">GLB</div>
<div class="t" style="left:222px;top:316.59px;font-size:12.3px;line-height:12.3px;color:#000080;transform:scaleX(0.95);transform-origin:0 0;">Western</div>
<div class="t" style="left:312px;width:65px;text-align:right;top:316.59px;font-size:12.3px;line-height:12.3px;color:#000080;transform:scaleX(0.885);transform-origin:100% 0;">6.750</div>
<div class="t" style="left:380px;width:65px;text-align:right;top:316.59px;font-size:12.3px;line-height:12.3px;color:#000080;transform:scaleX(0.885);transform-origin:100% 0;">49.500</div>
<div class="t" style="left:448px;width:65px;text-align:right;top:316.59px;font-size:12.3px;line-height:12.3px;color:#000080;transform:scaleX(0.885);transform-origin:100% 0;">334.125</div>
<div class="t" style="left:516px;width:68px;text-align:right;top:316.59px;font-size:12.3px;line-height:12.3px;color:#000080;transform:scaleX(0.885);transform-origin:100% 0;">68,224.148</div>
<div class="t" style="left:587px;width:65px;text-align:right;top:316.59px;font-size:12.3px;line-height:12.3px;color:#000080;transform:scaleX(0.885);transform-origin:100% 0;">2,756.531</div>
<div class="t" style="left:655px;width:68px;text-align:right;top:316.59px;font-size:12.3px;line-height:12.3px;color:#000080;transform:scaleX(0.885);transform-origin:100% 0;">1,268.631</div>
<div class="t" style="left:726px;width:70px;text-align:right;top:316.59px;font-size:12.3px;line-height:12.3px;color:#000080;transform:scaleX(0.885);transform-origin:100% 0;">375.891</div>
<div class="t" style="left:4px;top:331.59px;font-size:12.3px;line-height:12.3px;color:#000080;transform:scaleX(0.885);transform-origin:0 0;">6.75x51</div>
<div class="t" style="left:106.5px;top:331.59px;font-size:12.3px;line-height:12.3px;color:#000080;transform:scaleX(0.95);transform-origin:0 0;">GLB</div>
<div class="t" style="left:222px;top:331.59px;font-size:12.3px;line-height:12.3px;color:#000080;transform:scaleX(0.95);transform-origin:0 0;">Western</div>
<div class="t" style="left:312px;width:65px;text-align:right;top:331.59px;font-size:12.3px;line-height:12.3px;color:#000080;transform:scaleX(0.885);transform-origin:100% 0;">6.750</div>
<div class="t" style="left:380px;width:65px;text-align:right;top:331.59px;font-size:12.3px;line-height:12.3px;color:#000080;transform:scaleX(0.885);transform-origin:100% 0;">51.000</div>
<div class="t" style="left:448px;width:65px;text-align:right;top:331.59px;font-size:12.3px;line-height:12.3px;color:#000080;transform:scaleX(0.885);transform-origin:100% 0;">344.250</div>
<div class="t" style="left:516px;width:68px;text-align:right;top:331.59px;font-size:12.3px;line-height:12.3px;color:#000080;transform:scaleX(0.885);transform-origin:100% 0;">74,616.188</div>
<div class="t" style="left:587px;width:65px;text-align:right;top:331.59px;font-size:12.3px;line-height:12.3px;color:#000080;transform:scaleX(0.885);transform-origin:100% 0;">2,926.125</div>
<div class="t" style="left:655px;width:68px;text-align:right;top:331.59px;font-size:12.3px;line-height:12.3px;color:#000080;transform:scaleX(0.885);transform-origin:100% 0;">1,307.074</div>
<div class="t" style="left:726px;width:70px;text-align:right;top:331.59px;font-size:12.3px;line-height:12.3px;color:#000080;transform:scaleX(0.885);transform-origin:100% 0;">387.281</div>
<div class="t" style="left:4px;top:346.59px;font-size:12.3px;line-height:12.3px;color:#000080;transform:scaleX(0.885);transform-origin:0 0;">6.75x52.5</div>
<div class="t" style="left:106.5px;top:346.59px;font-size:12.3px;line-height:12.3px;color:#000080;transform:scaleX(0.95);transform-origin:0 0;">GLB</div>
<div class="t" style="left:222px;top:346.59px;font-size:12.3px;line-height:12.3px;color:#000080;transform:scaleX(0.95);transform-origin:0 0;">Western</div>
<div class="t" style="left:312px;width:65px;text-align:right;top:346.59px;font-size:12.3px;line-height:12.3px;color:#000080;transform:scaleX(0.885);transform-origin:100% 0;">6.750</div>
<div class="t" style="left:380px;width:65px;text-align:right;top:346.59px;font-size:12.3px;line-height:12.3px;color:#000080;transform:scaleX(0.885);transform-origin:100% 0;">52.500</div>
<div class="t" style="left:448px;width:65px;text-align:right;top:346.59px;font-size:12.3px;line-height:12.3px;color:#000080;transform:scaleX(0.885);transform-origin:100% 0;">354.375</div>
<div class="t" style="left:516px;width:68px;text-align:right;top:346.59px;font-size:12.3px;line-height:12.3px;color:#000080;transform:scaleX(0.885);transform-origin:100% 0;">81,395.508</div>
<div class="t" style="left:587px;width:65px;text-align:right;top:346.59px;font-size:12.3px;line-height:12.3px;color:#000080;transform:scaleX(0.885);transform-origin:100% 0;">3,100.781</div>
<div class="t" style="left:655px;width:68px;text-align:right;top:346.59px;font-size:12.3px;line-height:12.3px;color:#000080;transform:scaleX(0.885);transform-origin:100% 0;">1,345.518</div>
<div class="t" style="left:726px;width:70px;text-align:right;top:346.59px;font-size:12.3px;line-height:12.3px;color:#000080;transform:scaleX(0.885);transform-origin:100% 0;">398.672</div>
<div class="t" style="left:4px;top:361.59px;font-size:12.3px;line-height:12.3px;color:#000080;transform:scaleX(0.885);transform-origin:0 0;">6.75x54</div>
<div class="t" style="left:106.5px;top:361.59px;font-size:12.3px;line-height:12.3px;color:#000080;transform:scaleX(0.95);transform-origin:0 0;">GLB</div>
<div class="t" style="left:222px;top:361.59px;font-size:12.3px;line-height:12.3px;color:#000080;transform:scaleX(0.95);transform-origin:0 0;">Western</div>
<div class="t" style="left:312px;width:65px;text-align:right;top:361.59px;font-size:12.3px;line-height:12.3px;color:#000080;transform:scaleX(0.885);transform-origin:100% 0;">6.750</div>
<div class="t" style="left:380px;width:65px;text-align:right;top:361.59px;font-size:12.3px;line-height:12.3px;color:#000080;transform:scaleX(0.885);transform-origin:100% 0;">54.000</div>
<div class="t" style="left:448px;width:65px;text-align:right;top:361.59px;font-size:12.3px;line-height:12.3px;color:#000080;transform:scaleX(0.885);transform-origin:100% 0;">364.500</div>
<div class="t" style="left:516px;width:68px;text-align:right;top:361.59px;font-size:12.3px;line-height:12.3px;color:#000080;transform:scaleX(0.885);transform-origin:100% 0;">88,573.500</div>
<div class="t" style="left:587px;width:65px;text-align:right;top:361.59px;font-size:12.3px;line-height:12.3px;color:#000080;transform:scaleX(0.885);transform-origin:100% 0;">3,280.500</div>
<div class="t" style="left:655px;width:68px;text-align:right;top:361.59px;font-size:12.3px;line-height:12.3px;color:#000080;transform:scaleX(0.885);transform-origin:100% 0;">1,383.961</div>
<div class="t" style="left:726px;width:70px;text-align:right;top:361.59px;font-size:12.3px;line-height:12.3px;color:#000080;transform:scaleX(0.885);transform-origin:100% 0;">410.063</div>
<div class="t" style="left:4px;top:376.59px;font-size:12.3px;line-height:12.3px;color:#000080;transform:scaleX(0.885);transform-origin:0 0;">6.75x55.5</div>
<div class="t" style="left:106.5px;top:376.59px;font-size:12.3px;line-height:12.3px;color:#000080;transform:scaleX(0.95);transform-origin:0 0;">GLB</div>
<div class="t" style="left:222px;top:376.59px;font-size:12.3px;line-height:12.3px;color:#000080;transform:scaleX(0.95);transform-origin:0 0;">Western</div>
<div class="t" style="left:312px;width:65px;text-align:right;top:376.59px;font-size:12.3px;line-height:12.3px;color:#000080;transform:scaleX(0.885);transform-origin:100% 0;">6.750</div>
<div class="t" style="left:380px;width:65px;text-align:right;top:376.59px;font-size:12.3px;line-height:12.3px;color:#000080;transform:scaleX(0.885);transform-origin:100% 0;">55.500</div>
<div class="t" style="left:448px;width:65px;text-align:right;top:376.59px;font-size:12.3px;line-height:12.3px;color:#000080;transform:scaleX(0.885);transform-origin:100% 0;">374.625</div>
<div class="t" style="left:516px;width:68px;text-align:right;top:376.59px;font-size:12.3px;line-height:12.3px;color:#000080;transform:scaleX(0.885);transform-origin:100% 0;">96,161.555</div>
<div class="t" style="left:587px;width:65px;text-align:right;top:376.59px;font-size:12.3px;line-height:12.3px;color:#000080;transform:scaleX(0.885);transform-origin:100% 0;">3,465.281</div>
<div class="t" style="left:655px;width:68px;text-align:right;top:376.59px;font-size:12.3px;line-height:12.3px;color:#000080;transform:scaleX(0.885);transform-origin:100% 0;">1,422.404</div>
<div class="t" style="left:726px;width:70px;text-align:right;top:376.59px;font-size:12.3px;line-height:12.3px;color:#000080;transform:scaleX(0.885);transform-origin:100% 0;">421.453</div>
</div>
<div class="b" style="left:122px;top:409px;width:1px;height:417px;background:#6c6c6c;"></div>
<div class="b" style="left:237px;top:409px;width:1px;height:417px;background:#6c6c6c;"></div>
<div class="b" style="left:333px;top:409px;width:1px;height:417px;background:#6c6c6c;"></div>
<div class="b" style="left:401px;top:409px;width:1px;height:417px;background:#6c6c6c;"></div>
<div class="b" style="left:469px;top:409px;width:1px;height:417px;background:#6c6c6c;"></div>
<div class="b" style="left:537px;top:409px;width:1px;height:417px;background:#6c6c6c;"></div>
<div class="b" style="left:608px;top:409px;width:1px;height:417px;background:#6c6c6c;"></div>
<div class="b" style="left:676px;top:409px;width:1px;height:417px;background:#6c6c6c;"></div>
<div class="b" style="left:747px;top:409px;width:1px;height:417px;background:#6c6c6c;"></div>
<div class="b" style="left:821px;top:409px;width:16px;height:434px;background:#f0f0f0;"></div>
<div class="b" style="left:821px;top:615px;width:15px;height:17px;background:#cdcdcd;"></div>
<svg class="b" style="left:821px;top:409px" width="16" height="16"><path d="M4.5 10 L8 6.5 L11.5 10" fill="none" stroke="#606060" stroke-width="2"/></svg>
<svg class="b" style="left:821px;top:826px" width="16" height="16"><path d="M4.5 7 L8 10.5 L11.5 7" fill="none" stroke="#606060" stroke-width="2"/></svg>
<div class="b" style="left:21px;top:826px;width:799px;height:17px;background:repeating-conic-gradient(#f0f0f0 0 25%, #fcfcfc 0 50%) 0 0/2px 2px;"></div>
<div class="b" style="left:20px;top:826px;width:14px;height:14px;background:#f0f0f0;border-top:1px solid #e3e3e3;border-left:1px solid #e3e3e3;border-bottom:2px solid #6c6c6c;border-right:2px solid #6c6c6c;"></div>
<div class="b" style="left:37px;top:826px;width:14px;height:14px;background:#f0f0f0;border-top:1px solid #e3e3e3;border-left:1px solid #e3e3e3;border-bottom:2px solid #6c6c6c;border-right:2px solid #6c6c6c;"></div>
<div class="b" style="left:804px;top:826px;width:13px;height:14px;background:#f0f0f0;border-top:1px solid #e3e3e3;border-left:1px solid #e3e3e3;border-bottom:2px solid #6c6c6c;border-right:2px solid #6c6c6c;"></div>
<svg class="b" style="left:20px;top:826px" width="16" height="16"><path d="M9.5 4 L5.5 8 L9.5 12 Z" fill="#000"/></svg>
<svg class="b" style="left:804px;top:826px" width="16" height="16"><path d="M6 4 L10 8 L6 12 Z" fill="#000"/></svg>
<div class="b" style="left:869px;top:395px;width:158px;height:445px;border:1px solid #8f8f8f;"></div>
<div class="b" style="left:880px;top:411px;width:135px;height:58px;background:#f0f0f0;border-top:1px solid #e3e3e3;border-left:1px solid #e3e3e3;border-bottom:2px solid #6c6c6c;border-right:2px solid #6c6c6c;"></div>
<div class="b" style="left:880px;top:483px;width:135px;height:58px;background:#f0f0f0;border-top:1px solid #e3e3e3;border-left:1px solid #e3e3e3;border-bottom:2px solid #6c6c6c;border-right:2px solid #6c6c6c;"></div>
<div class="t" style="left:920px;top:434.73px;font-size:14.5px;line-height:14.5px;color:#000080;font-weight:bold;"><u>S</u>elect</div>
<div class="t" style="left:920px;top:506.73px;font-size:14.5px;line-height:14.5px;color:#000080;font-weight:bold;"><u>C</u>lose</div>
<svg class="b" style="left:880px;top:411px" width="40" height="50"><path d="M9.4 32 L16.9 39 L30.2 19.5" fill="none" stroke="#3cb43a" stroke-width="7" stroke-linecap="round" stroke-linejoin="round"/><path d="M9.4 32 L16.9 39 L30.2 19.5" fill="none" stroke="#72d862" stroke-width="5" stroke-linecap="round" stroke-linejoin="round"/><path d="M10.5 32.5 L17 38 L29.5 20.5" fill="none" stroke="#8fe880" stroke-width="1.6" stroke-linecap="round" stroke-linejoin="round"/></svg>
<svg class="b" style="left:880px;top:483px" width="40" height="50"><path d="M9.8 19.6 L29.9 39.8 M30 19.6 L9.8 39.8" fill="none" stroke="#cc444c" stroke-width="7.6" stroke-linecap="butt" stroke-linejoin="round"/><path d="M10.6 20.4 L29.1 39 M29.2 20.4 L10.6 39" fill="none" stroke="#e0626a" stroke-width="6"/><path d="M14 24 L26 36 M26 24 L14 36" fill="none" stroke="#ec7a80" stroke-width="2"/></svg>
<svg class="b" style="left:937px;top:33px" width="16" height="16" viewBox="0 0 16 16"><circle cx="8" cy="8" r="7.6" fill="#0a3cc8"/><circle cx="8" cy="8" r="6.6" fill="#3aa0ff"/><circle cx="8" cy="8" r="5.6" fill="#1a74dc"/><path d="M5.6 6.2 Q5.6 3.9 8.2 3.9 Q10.8 3.9 10.8 6.1 Q10.8 7.4 9.3 8.2 Q8.8 8.6 8.8 9.6 L7 9.6 Q7 8 8.2 7.3 Q9 6.8 9 6.1 Q9 5.3 8.2 5.3 Q7.4 5.3 7.3 6.2 Z" fill="#fff"/><rect x="6.9" y="10.6" width="2" height="2" fill="#fff"/></svg>
<svg class="b" style="left:980px;top:25px" width="26" height="25" viewBox="0 0 26 25"><path d="M5 16.5 L7.3 19.6 L21.2 19.6 L21.2 16 Z" fill="#000"/><path d="M5 12 L19.6 12 L19.6 15.6 L21.1 16 L21.1 18.6 L7.6 18.6 L5 16.4 Z" fill="#3444e0"/><path d="M7 12.8 L18.2 12.8 L18.2 15.6 L8 15.6 Z" fill="#9cc4c8"/><path d="M9.3 15 L18.8 5.5" stroke="#000" stroke-width="4.6" stroke-linecap="round"/><path d="M10 14.3 L17.6 6.7" stroke="#fff200" stroke-width="2.8"/><path d="M17.6 6.7 L19 5.3" stroke="#f08a8a" stroke-width="2.8"/><path d="M10 14.3 L11 13.3" stroke="#f0a040" stroke-width="2.8"/><circle cx="8.6" cy="15.6" r="0.9" fill="#000"/></svg>
<div class="t" style="left:10px;top:858.57px;font-size:13.5px;line-height:13.5px;color:#000;letter-spacing:0.45px;">Using Database Filename :</div>
<div class="t" style="left:248px;top:859.00px;font-size:13px;line-height:13px;color:#000080;">C:\Users\Public\Documents\ENERCALC Common Data Files\EC6_TIMBER.tps</div>
</body></html>
